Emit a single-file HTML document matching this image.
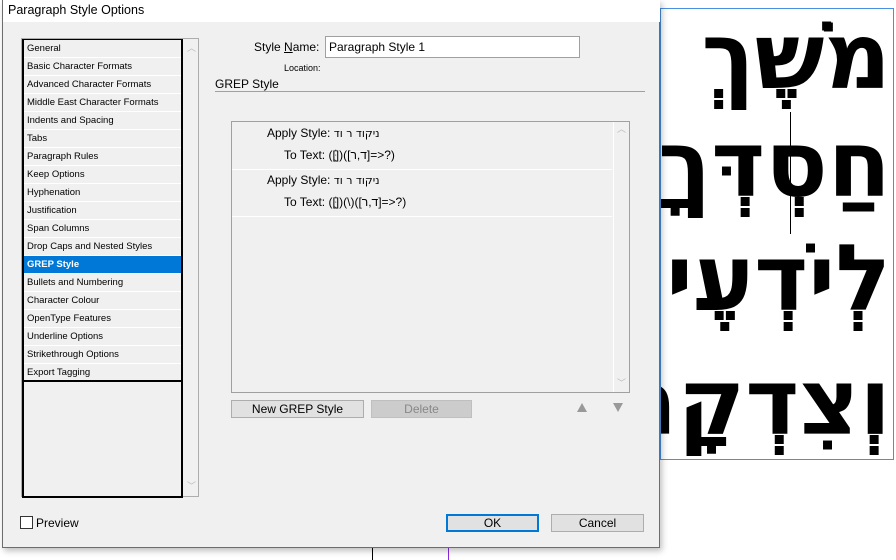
<!DOCTYPE html>
<html><head><meta charset="utf-8"><style>
*{margin:0;padding:0;box-sizing:border-box}
body{width:896px;height:560px;background:#fff;position:relative;overflow:hidden;font-family:"Liberation Sans",sans-serif;color:#000}
.a{position:absolute}
.dlg{left:2px;top:0;width:658px;height:548px;background:#f0f0f0;border:1px solid #6d6d6d;border-top:none;box-shadow:2px 3px 6px rgba(0,0,0,.25)}
.title{left:0;top:0;width:657px;height:22px;background:#fff;font-size:12.5px;padding:3px 0 0 5px}
.list{left:18px;top:38px;width:178px;height:459px;border:1px solid #adadad;background:#f0f0f0}
.inner{left:0;top:0;width:161px;height:459px;border:2px solid #000;border-top:1px solid #000;background:#f0f0f0}
.it{height:18px;border-bottom:1px solid #fff;font-size:9.5px;padding:3px 0 0 3px;white-space:nowrap}
.sel{background:#0078d7;color:#fff;font-weight:bold}
.lbl{font-size:12px}
.btn{border:1px solid #adadad;background:#e1e1e1;font-size:12px;text-align:center;line-height:16px}
.hb{font-family:"DejaVu Sans",sans-serif;font-weight:bold;font-size:92px;direction:rtl;text-align:right;white-space:nowrap;line-height:1}
</style></head><body>
<div class="a" style="left:660px;top:8px;width:234px;height:452px;border:1px solid #4a90e2;overflow:hidden">
 <div class="a hb" style="right:2px;top:2px">מֹשֶׁךְ</div>
 <div class="a hb" style="right:2px;top:110px">חַסְדְּךָ</div>
 <div class="a hb" style="right:2px;top:224px">לְיֹדְעֶיךָ</div>
 <div class="a hb" style="right:2px;top:348px">וְצִדְקָתְךָ</div>
 <div class="a" style="left:129px;top:103px;width:1px;height:122px;background:#000"></div>
</div>
<div class="a" style="left:372px;top:548px;width:1px;height:12px;background:#000"></div>
<div class="a" style="left:448px;top:548px;width:1px;height:12px;background:#8a2be2"></div>
<div class="a dlg">
 <div class="a title">Paragraph Style Options</div>
 <div class="a list">
  <div class="a inner">
   <div class="it">General</div><div class="it">Basic Character Formats</div><div class="it">Advanced Character Formats</div><div class="it">Middle East Character Formats</div><div class="it">Indents and Spacing</div><div class="it">Tabs</div><div class="it">Paragraph Rules</div><div class="it">Keep Options</div><div class="it">Hyphenation</div><div class="it">Justification</div><div class="it">Span Columns</div><div class="it">Drop Caps and Nested Styles</div><div class="it sel">GREP Style</div><div class="it">Bullets and Numbering</div><div class="it">Character Colour</div><div class="it">OpenType Features</div><div class="it">Underline Options</div><div class="it">Strikethrough Options</div><div class="it" style="border-bottom:2px solid #000">Export Tagging</div>
  </div>
  <div class="a" style="left:165px;top:2px;font-size:9px;color:#bbb">︿</div>
  <div class="a" style="left:165px;top:440px;font-size:9px;color:#bbb">﹀</div>
 </div>
 <div class="a lbl" style="left:251px;top:40px">Style <u>N</u>ame:</div>
 <div class="a" style="left:322px;top:36px;width:255px;height:22px;background:#fff;border:1px solid #a0a0a0;font-size:12px;padding:3px 0 0 3px">Paragraph Style 1</div>
 <div class="a" style="left:281px;top:63px;font-size:9px">Location:</div>
 <div class="a lbl" style="left:212px;top:77px">GREP Style</div>
 <div class="a" style="left:212px;top:91px;width:430px;height:1px;background:#a0a0a0"></div>
 <div class="a" style="left:228px;top:121px;width:399px;height:272px;border:1px solid #a0a0a0">
  <div class="a" style="left:0;top:47px;width:380px;height:1px;background:#fff"></div>
  <div class="a" style="left:0;top:94px;width:380px;height:1px;background:#fff"></div>
  <div class="a lbl" style="left:35px;top:4px">Apply Style: <span style="font-family:'DejaVu Sans',sans-serif;font-size:11px">ניקוד ר וד</span></div>
  <div class="a lbl" style="left:52px;top:26px">To Text: ([ֹֻּ])([ד,ר]=&gt;?)</div>
  <div class="a lbl" style="left:35px;top:51px">Apply Style: <span style="font-family:'DejaVu Sans',sans-serif;font-size:11px">ניקוד ר וד</span></div>
  <div class="a lbl" style="left:52px;top:73px">To Text: ([ֹֻּ])(\)([ד,ר]=&gt;?)</div>
  <div class="a" style="left:381px;top:0;width:1px;height:270px;background:#fff"></div>
  <div class="a" style="left:385px;top:0;font-size:9px;color:#bbb">︿</div>
  <div class="a" style="left:385px;top:254px;font-size:9px;color:#bbb">﹀</div>
 </div>
 <div class="a btn" style="left:228px;top:400px;width:133px;height:18px">New GREP Style</div>
 <div class="a btn" style="left:368px;top:400px;width:101px;height:18px;background:#ccc;color:#888;border-color:#bfbfbf">Delete</div>
 <div class="a" style="left:574px;top:403px;width:0;height:0;border-left:5px solid transparent;border-right:5px solid transparent;border-bottom:9px solid #999"></div>
 <div class="a" style="left:610px;top:403px;width:0;height:0;border-left:5px solid transparent;border-right:5px solid transparent;border-top:9px solid #999"></div>
 <div class="a" style="left:17px;top:516px;width:13px;height:13px;border:1px solid #333;background:#fff"></div>
 <div class="a lbl" style="left:33px;top:516px">Preview</div>
 <div class="a btn" style="left:443px;top:514px;width:93px;height:18px;border:2px solid #0078d7;line-height:14px">OK</div>
 <div class="a btn" style="left:548px;top:514px;width:93px;height:18px">Cancel</div>
</div>
</body></html>
